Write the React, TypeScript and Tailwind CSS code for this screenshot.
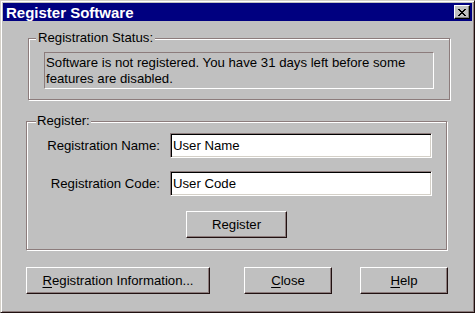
import React from "react";

const xRows = ["11000011", "01100110", "00111100", "00011000", "00111100", "01100110", "11000011"];

function CloseGlyph() {
  return (
    <svg width="8" height="7" viewBox="0 0 8 7" shapeRendering="crispEdges">
      {xRows.map((row, y) =>
        row.split("").map((c, x) =>
          c === "1" ? <rect key={`${x}-${y}`} x={x} y={y} width="1" height="1" fill="#000" /> : null,
        ),
      )}
    </svg>
  );
}

const btn =
  "flex h-[27px] items-center justify-center border border-t-white border-l-white border-r-[#201010] border-b-[#201010] bg-[#c0c0c0] shadow-[inset_-1px_-1px_0_#8c7c7c] text-[13.2px] text-black";

const field =
  "h-[25px] w-[262px] border border-t-[#8c7c7c] border-l-[#8c7c7c] border-r-white border-b-white bg-white pl-[2px] shadow-[inset_1px_1px_0_#000,inset_-1px_-1px_0_#d4d0c8] flex items-center text-[13.2px] text-black";

const frame =
  "border border-[#8c7c7c] shadow-[1px_1px_0_#fff,inset_1px_1px_0_#fff] p-0 m-0 min-w-0";

export default function App() {
  return (
    <div className="flex h-[313px] w-[475px] flex-col border border-t-[#d4d0c8] border-l-[#d4d0c8] border-r-[#201010] border-b-[#201010] bg-[#c0c0c0] p-[2px] font-['Liberation_Sans',Arial,sans-serif] text-[13.2px] text-black shadow-[inset_1px_1px_0_#fff,inset_-1px_-1px_0_#8c7c7c]">
      {/* title bar */}
      <div className="flex h-[18px] items-center justify-between bg-[#000080] pl-[3px] pr-[2px]">
        <span className="text-[15px] font-bold leading-none text-white">Register Software</span>
        <div className="flex h-[14px] w-[16px] items-center justify-center border border-t-white border-l-white border-r-black border-b-black bg-[#c0c0c0] shadow-[inset_-1px_-1px_0_#808080]">
          <CloseGlyph />
        </div>
      </div>

      {/* status */}
      <fieldset className={`${frame} ml-[25px] mt-[9px] w-[422px]`}>
        <legend className="ml-[7px] bg-[#c0c0c0] px-[2px] leading-[16px]">Registration Status:</legend>
        <div className="px-[15px] pb-[10px] pt-[6px]">
          <div className="h-[37px] border border-t-[#8c7c7c] border-l-[#8c7c7c] border-r-white border-b-white pl-[1px] pt-[2px] leading-[16px]">
            Software is not registered. You have 31 days left before some features are disabled.
          </div>
        </div>
      </fieldset>

      {/* register */}
      <fieldset className={`${frame} ml-[23px] mt-[13px] w-[421px]`}>
        <legend className="ml-[9px] bg-[#c0c0c0] px-[1px] leading-[16px]">Register:</legend>
        <div className="flex flex-col pb-[11px] pt-[4px]">
          <div className="flex items-center gap-[10px]">
            <span className="w-[133px] text-right">Registration Name:</span>
            <div className={field}>User Name</div>
          </div>
          <div className="mt-[13px] flex items-center gap-[10px]">
            <span className="w-[133px] text-right">Registration Code:</span>
            <div className={field}>User Code</div>
          </div>
          <div className={`${btn} ml-[159px] mt-[15px] w-[101px]`}>Register</div>
        </div>
      </fieldset>

      {/* buttons */}
      <div className="ml-[23px] mt-[17px] flex">
        <div className={`${btn} w-[184px]`}>
          <span>
            <span className="underline underline-offset-2">R</span>egistration Information...
          </span>
        </div>
        <div className={`${btn} ml-[34px] w-[88px]`}>
          <span>
            <span className="underline underline-offset-2">C</span>lose
          </span>
        </div>
        <div className={`${btn} ml-[28px] w-[88px]`}>
          <span>
            <span className="underline underline-offset-2">H</span>elp
          </span>
        </div>
      </div>
    </div>
  );
}
